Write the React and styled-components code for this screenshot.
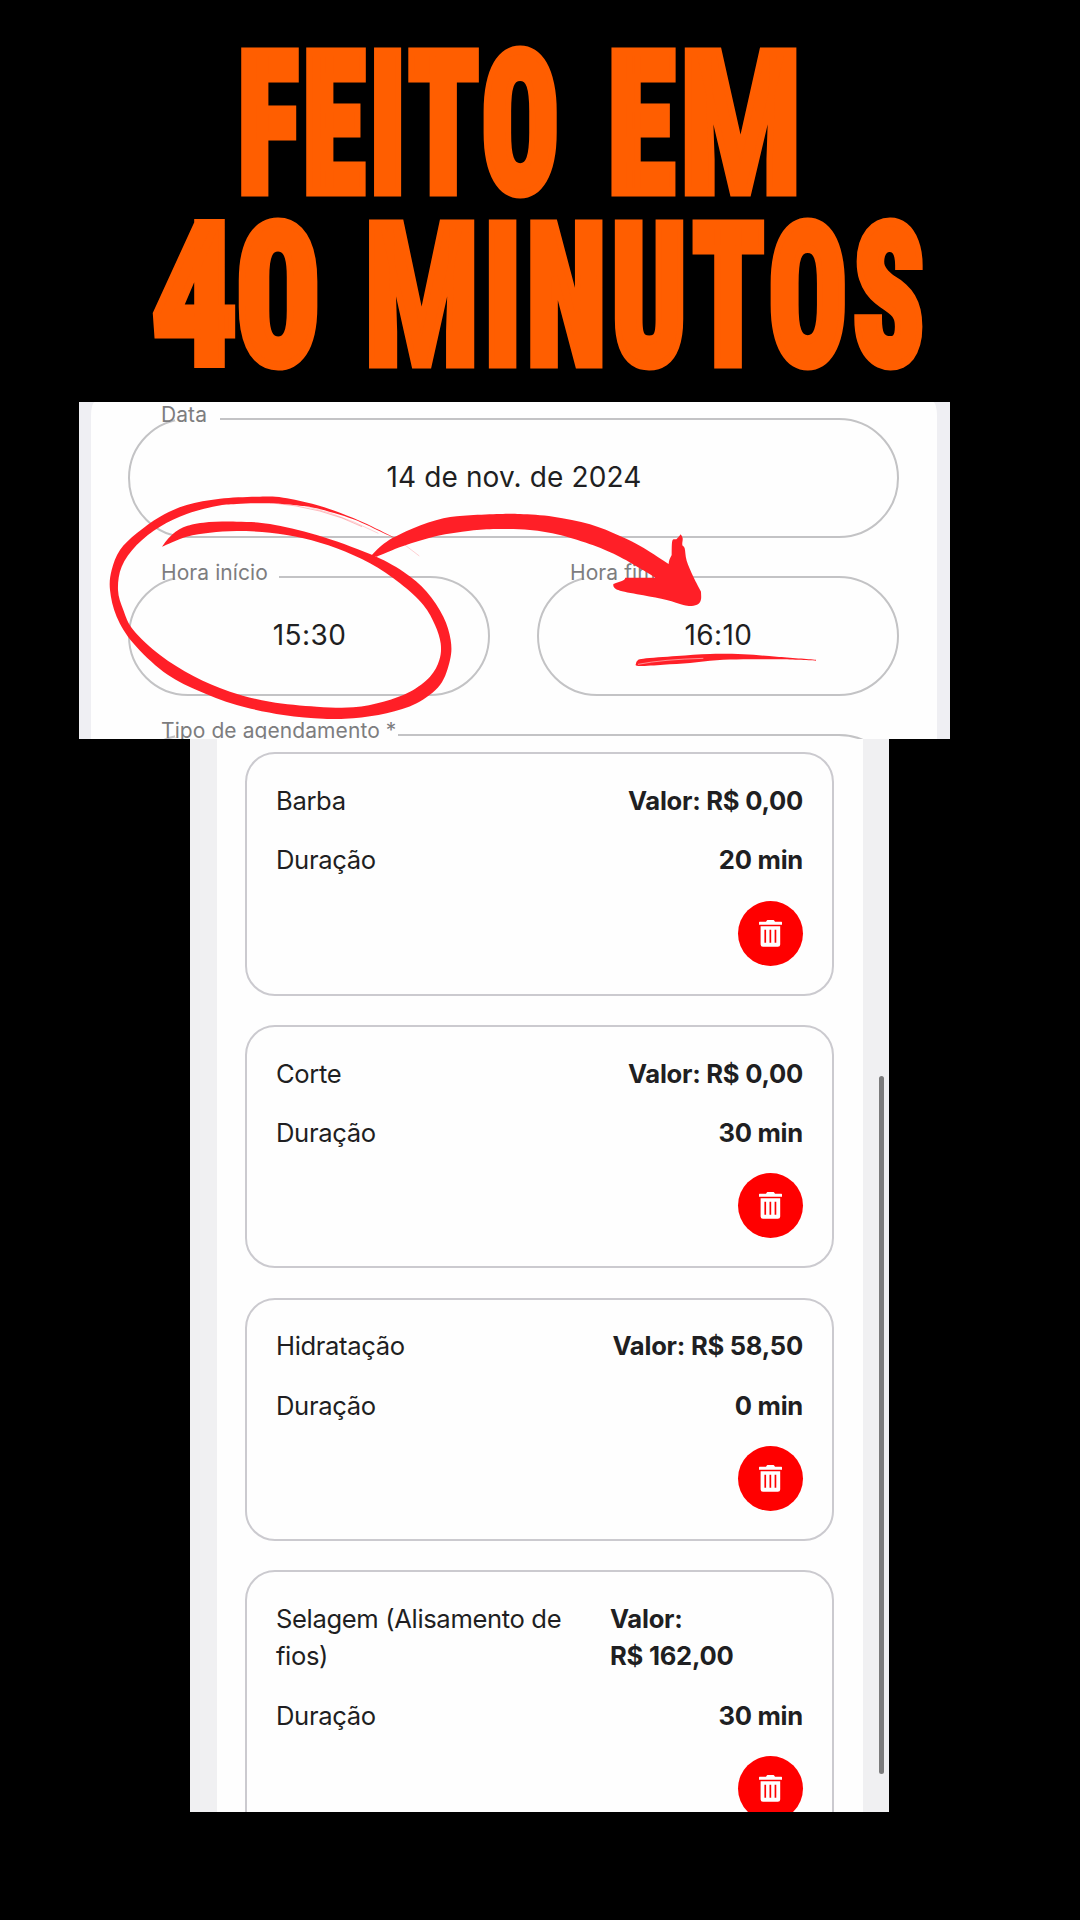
import styled, { createGlobalStyle } from "styled-components";

const GlobalStyle = createGlobalStyle`
  * {
    box-sizing: border-box;
  }

  body {
    background-color: #000000;
    color: #1f1f22;
    font-family: Inter, "Liberation Sans", sans-serif;
    margin: 0;
  }
`;

const Page = styled.main`
  height: 1920px;
  overflow: hidden;
  width: 1080px;
`;

const Headline = styled.h1`
  -webkit-text-stroke: 9px #ff5e00;
  color: #ff5e00;
  font-family: Roboto, "Liberation Sans", sans-serif;
  font-size: 196px;
  font-stretch: 75%;
  font-weight: 900;
  height: 402px;
  line-height: 172px;
  margin: 0;
  padding-top: 39px;
`;

const HeadlineRow = styled.span`
  display: flex;
  gap: ${({ $gap }) => $gap}px;
  padding-left: ${({ $start }) => $start}px;
`;

const Word = styled.span`
  flex: none;
  letter-spacing: ${({ $spacing }) => $spacing}px;
  transform: scaleX(${({ $scale }) => $scale});
  transform-origin: left;
  white-space: nowrap;
  width: ${({ $width }) => $width}px;
`;

const Wide = styled.span`
  font-stretch: 100%;
`;

const FormPanel = styled.section`
  background-color: #efeff3;
  height: 337px;
  margin-left: 79px;
  overflow: hidden;
  padding: 0 13px 0 12px;
  position: relative;
  width: 871px;
`;

const FormSheet = styled.div`
  background-color: #fefefe;
  border-radius: 4px 4px 0 0 / 14px 14px 0 0;
  display: grid;
  gap: 38px 47px;
  grid-template-columns: 362px 362px;
  height: 100%;
  padding: 16px 38px 0 37px;
`;

const Field = styled.div`
  align-items: center;
  border: 2px solid #c3c3c5;
  border-radius: 60px;
  display: flex;
  font-size: 28px;
  grid-column: ${({ $wide }) => ($wide ? "span 2" : "auto")};
  height: 120px;
  justify-content: center;
  letter-spacing: ${({ $spacing }) => $spacing || 0.4}px;
  padding: 0 0 2px 1px;
  position: relative;
`;

const FieldLabel = styled.span`
  color: #7d7d7f;
  font-size: 21px;
  left: 31px;
  letter-spacing: 0.08px;
  line-height: 26px;
  position: absolute;
  top: -18px;
  white-space: nowrap;
  z-index: 0;

  &:before {
    background-color: #fefefe;
    content: "";
    height: 4px;
    left: 14px;
    position: absolute;
    top: 15px;
    width: ${({ $notch }) => $notch}px;
    z-index: -1;
  }
`;

const Scribble = styled.svg`
  fill: #ff1f27;
  inset: 0;
  position: absolute;
  z-index: 1;
`;

const ListPanel = styled.section`
  background-color: #f0f0f2;
  height: 1073px;
  margin-left: 190px;
  overflow: hidden;
  padding: 0 26px 0 27px;
  position: relative;
  width: 699px;
`;

const ListSheet = styled.div`
  background-color: #fefefe;
  display: flex;
  flex-direction: column;
  gap: 29.1px;
  min-height: 100%;
  padding: 13.4px 29px 0 28px;
`;

const Scrollbar = styled.div`
  background-color: #7b7b7c;
  border-radius: 3px;
  height: 698px;
  position: absolute;
  right: 5px;
  top: 337px;
  width: 5px;
`;

const Card = styled.article`
  border: 2px solid #cbcacf;
  border-radius: 30px;
  display: flex;
  flex-direction: column;
  font-size: 25.6px;
  gap: 21.8px;
  line-height: 37.6px;
  padding: 27.7px 29px 28px;
`;

const CardRow = styled.div`
  display: flex;
  justify-content: space-between;
`;

const Name = styled.span`
  letter-spacing: -0.36px;
  max-width: 300px;
`;

const Amount = styled.strong`
  font-weight: 700;
  letter-spacing: -0.25px;
  max-width: 193px;
`;

const DeleteButton = styled.button.attrs({ type: "button" })`
  align-items: center;
  align-self: flex-end;
  background-color: #ff0000;
  border: 0;
  border-radius: 50%;
  cursor: pointer;
  display: flex;
  height: 65px;
  justify-content: center;
  padding: 0;
  width: 65px;
`;

const TrashIcon = () => (
  <svg width="23" height="27" viewBox="0 0 23 27" fill="#ffffff">
    <path d="M0 2.4Q0 1.8.6 1.8H7L8 .3Q8.2 0 8.6 0H14.4Q14.8 0 15 .3L16 1.8H22.4Q23 1.8 23 2.4V4.8H0Z" />
    <path
      fillRule="evenodd"
      d="M1.6 6.3H21.2V24.4Q21.2 26.8 18.8 26.8H4Q1.6 26.8 1.6 24.4ZM5.4 9.8V22.8H7.1V9.8ZM10.5 9.8V22.8H12.2V9.8ZM15.6 9.8V22.8H17.3V9.8Z"
    />
  </svg>
);

// Joins sharp-cornered edges, each one smoothed through its own points.
const brush = (...edges) =>
  edges
    .map((points, index) => {
      const start = `${index ? "L" : "M"}${points[0].join(" ")}`;
      const curves = points.slice(1).map((end, i) => {
        const from = points[i];
        const before = points[i - 1] || from;
        const after = points[i + 2] || end;
        const c1 = from.map((v, axis) => v + (end[axis] - before[axis]) / 6);
        const c2 = end.map((v, axis) => v - (after[axis] - from[axis]) / 6);
        return `C${[...c1, ...c2, ...end].map((v) => v.toFixed(1)).join(" ")}`;
      });
      return start + curves.join("");
    })
    .join("") + "Z";

const loop = brush(
  [
    [276, 470], [300, 440], [340, 412], [400, 398], [500, 395], [600, 402],
    [740, 435], [900, 492], [1000, 545], [1070, 605], [1120, 680], [1142, 750],
    [1140, 810], [1110, 885], [1040, 940], [950, 970], [850, 985], [760, 986],
    [640, 975], [500, 945], [380, 900], [280, 845], [190, 760], [140, 680],
    [120, 600], [125, 540], [150, 480], [200, 430], [270, 380], [350, 345],
    [450, 326], [570, 320], [640, 323], [740, 345], [850, 384], [950, 431],
    [984, 449],
  ],
  [
    [984, 449], [940, 429], [850, 388], [740, 355], [690, 347], [600, 340],
    [500, 342], [440, 348], [350, 372], [270, 410], [200, 465], [155, 530],
    [144, 600], [160, 660], [190, 720], [270, 795], [370, 858], [480, 905],
    [600, 935], [740, 950], [850, 952], [940, 935], [1020, 905], [1080, 860],
    [1108, 810], [1112, 760], [1095, 705], [1060, 645], [990, 580], [900, 520],
    [800, 475], [700, 445], [600, 428], [500, 423], [420, 428], [350, 440],
    [276, 470],
  ]
);

const arrow = brush(
  [
    [903, 497], [950, 455], [1030, 415], [1120, 385], [1200, 376], [1290, 372],
    [1350, 372], [1450, 380], [1560, 403], [1650, 438], [1720, 473], [1796, 522],
  ],
  [[1796, 522], [1798, 510], [1805, 495]],
  [[1805, 495], [1807, 452], [1820, 447], [1832, 433]],
  [[1832, 433], [1838, 445], [1837, 465], [1844, 475], [1850, 512], [1870, 560], [1893, 605]],
  [[1893, 605], [1893, 628], [1885, 642], [1865, 648], [1840, 645], [1790, 630], [1720, 616], [1650, 602], [1632, 592], [1630, 582]],
  [[1630, 582], [1660, 571], [1666, 563]],
  [[1666, 563], [1720, 563], [1756, 563]],
  [
    [1756, 563], [1720, 541], [1650, 501], [1570, 466], [1470, 435],
    [1380, 420], [1280, 417], [1200, 422], [1100, 438], [1000, 468], [920, 500],
  ]
);

const underline = brush(
  [
    [1698, 820], [1702, 812], [1720, 806], [1820, 798], [1920, 792],
    [2020, 793], [2120, 800], [2238, 809],
  ],
  [
    [2238, 812], [2120, 808], [2020, 808], [1940, 811], [1860, 819],
    [1780, 824], [1705, 828], [1698, 820],
  ]
);

const fields = [
  { label: "Data", value: "14 de nov. de 2024", notch: 45, spacing: 0.13, wide: true },
  { label: "Hora início", value: "15:30", notch: 104 },
  { label: "Hora fim", value: "16:10", notch: 84 },
  { label: "Tipo de agendamento *", value: "", notch: 223, wide: true },
];

const services = [
  { name: "Barba", price: "R$\u00a00,00", duration: "20 min" },
  { name: "Corte", price: "R$\u00a00,00", duration: "30 min" },
  { name: "Hidratação", price: "R$\u00a058,50", duration: "0 min" },
  { name: "Selagem (Alisamento de fios)", price: "R$\u00a0162,00", duration: "30 min" },
];

const Service = ({ name, price, duration }) => (
  <Card>
    <CardRow>
      <Name>{name}</Name>
      <Amount>Valor: {price}</Amount>
    </CardRow>
    <CardRow>
      <Name>Duração</Name>
      <Amount>{duration}</Amount>
    </CardRow>
    <DeleteButton aria-label="Excluir">
      <TrashIcon />
    </DeleteButton>
  </Card>
);

const App = () => (
  <Page>
    <GlobalStyle />

    <Headline>
      <HeadlineRow $start={238} $gap={45}>
        <Word $scale={0.65} $spacing={7} $width={325}>
          FEITO
        </Word>
        <Word $scale={0.7} $spacing={8} $width={190}>
          E<Wide>M</Wide>
        </Word>
      </HeadlineRow>
      <HeadlineRow $start={152} $gap={47}>
        <Word $scale={0.74} $spacing={0} $width={166}>
          <Wide>40</Wide>
        </Word>
        <Word $scale={0.66} $spacing={9.3} $width={560}>
          <Wide>M</Wide>INUTOS
        </Word>
      </HeadlineRow>
    </Headline>

    <FormPanel>
      <FormSheet>
        {fields.map(({ label, value, notch, spacing, wide }) => (
          <Field key={label} $wide={wide} $spacing={spacing}>
            <FieldLabel $notch={notch}>{label}</FieldLabel>
            {value}
          </Field>
        ))}
      </FormSheet>

      <Scribble width="871" height="337" viewBox="27 36 2613 1011">
        <path d={loop} />
        <g fill="none" stroke="#ff1f27" strokeWidth="1.5">
          <path d="M600 338Q760 352 876 410" opacity="0.6" />
          <path d="M640 336Q780 356 925 430" opacity="0.4" />
          <path d="M980 446L1048 498" opacity="0.4" />
        </g>
        <path d={arrow} />
        <path d={underline} />
        <path d="M1704 823Q1780 808 1900 805" fill="none" stroke="#fefefe" strokeWidth="1.5" />
      </Scribble>
    </FormPanel>

    <ListPanel>
      <ListSheet>
        {services.map((service) => (
          <Service key={service.name} {...service} />
        ))}
      </ListSheet>
      <Scrollbar />
    </ListPanel>
  </Page>
);

export default App;
